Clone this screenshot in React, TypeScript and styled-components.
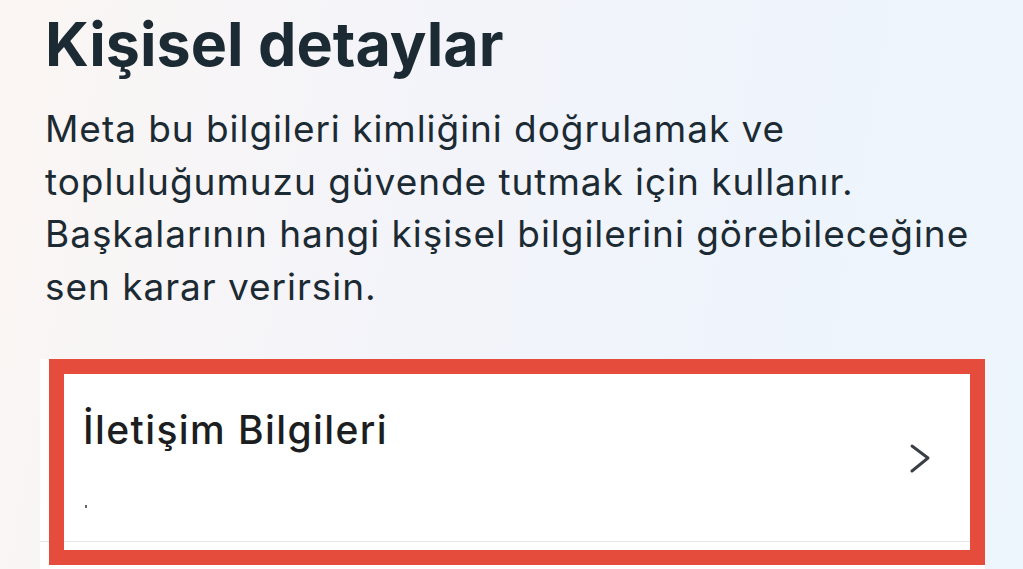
import React from "react";
import styled, { createGlobalStyle } from "styled-components";

const GlobalStyle = createGlobalStyle`
  html, body { margin: 0; padding: 0; }
  body {
    width: 1023px;
    height: 569px;
    overflow: hidden;
    font-family: Inter, "Noto Sans", sans-serif;
    background: linear-gradient(100deg, #fbf6f3 0%, #f4f4f9 35%, #eff4fc 70%, #edf5fd 100%);
    color: #1c2b33;
  }
`;

const Page = styled.main`
  display: flex;
  flex-direction: column;
  padding: 8px 0 0 45px;
  width: 1023px;
  height: 569px;
  box-sizing: border-box;
`;

const Title = styled.h1`
  margin: 0;
  font-family: Inter, "Noto Sans", sans-serif;
  font-weight: 700;
  font-size: 61px;
  line-height: 72px;
  color: #1c2b33;
`;

const Description = styled.p`
  margin: 23px 0 0 0;
  font-family: Inter, "Noto Sans", sans-serif;
  font-weight: 400;
  font-size: 37px;
  line-height: 52.5px;
  letter-spacing: 0.95px;
  color: #1c2b33;
  max-width: 975px;
`;

const Card = styled.section`
  position: relative;
  margin: 46px 0 0 -5px;
  width: 945px;
  flex: 1;
  background: #ffffff;
`;

const Row = styled.div`
  display: grid;
  grid-template-columns: 1fr auto;
  height: 183px;
  box-sizing: border-box;
  padding: 48px 0 0 43px;
  border-bottom: 1px solid #e4e6ea;
  margin-right: 15px;
`;

const RowText = styled.div`
  display: flex;
  flex-direction: column;
`;

const RowTitle = styled.span`
  font-family: Inter, "Noto Sans", sans-serif;
  font-weight: 500;
  font-size: 39px;
  line-height: 46px;
  letter-spacing: 1.4px;
  color: #1c1e21;
`;

const RowSub = styled.span`
  margin: 52px 0 0 2px;
  width: 2px;
  height: 3px;
  background: #606770;
`;

const Chevron = styled.svg`
  margin: 37px 40px 0 0;
  width: 20px;
  height: 30px;
`;

const Highlight = styled.div`
  position: absolute;
  left: 9px;
  top: 0;
  width: 936px;
  height: 206px;
  box-sizing: border-box;
  border: 15px solid #e64c3c;
  pointer-events: none;
`;

export default function App() {
  return (
    <>
      <GlobalStyle />
      <Page>
        <Title>Kişisel detaylar</Title>
        <Description>
          Meta bu bilgileri kimliğini doğrulamak ve
          <br />
          topluluğumuzu güvende tutmak için kullanır.
          <br />
          Başkalarının hangi kişisel bilgilerini görebileceğine
          <br />
          sen karar verirsin.
        </Description>
        <Card>
          <Row>
            <RowText>
              <RowTitle>İletişim Bilgileri</RowTitle>
              <RowSub />
            </RowText>
            <Chevron viewBox="0 0 20 30" fill="none">
              <polyline
                points="2,2 18,14 2,27"
                stroke="#3a3f45"
                strokeWidth="2.9"
                strokeLinecap="round"
                strokeLinejoin="round"
              />
            </Chevron>
          </Row>
          <Highlight />
        </Card>
      </Page>
    </>
  );
}
